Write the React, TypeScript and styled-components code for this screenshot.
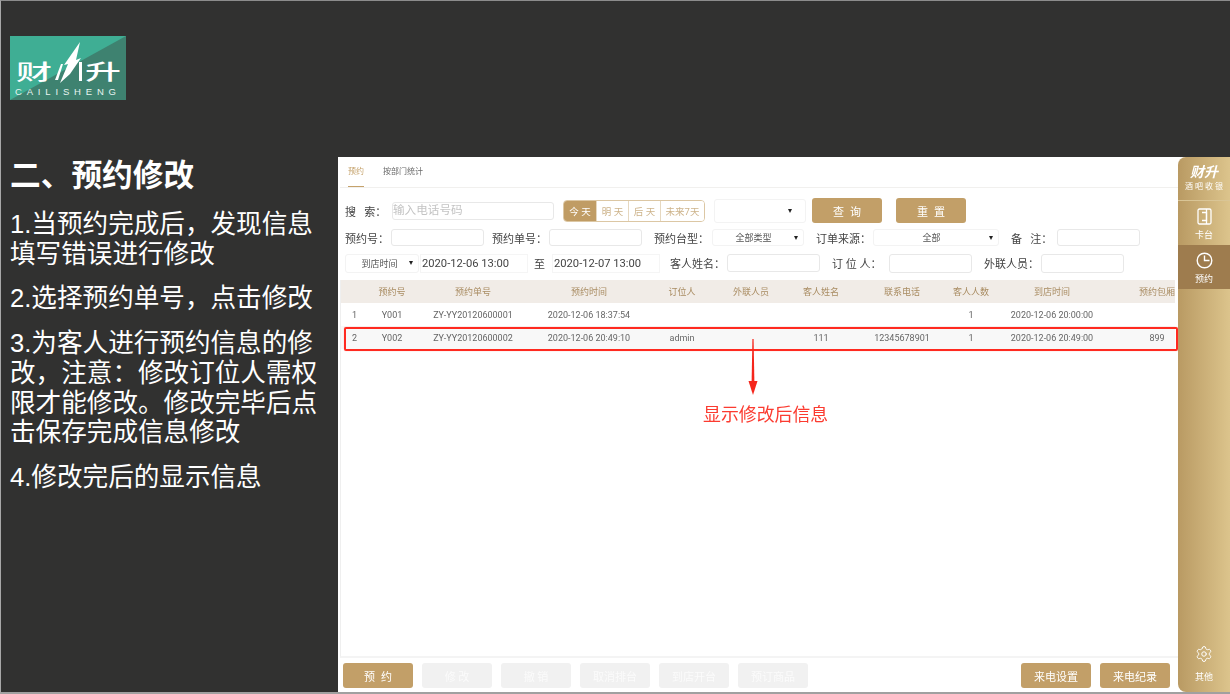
import React from 'react'
import styled, { createGlobalStyle } from 'styled-components'
import { Settings } from 'lucide-react'

const cjk = `Roboto, "Noto Sans CJK SC", sans-serif`

const GlobalStyle = createGlobalStyle`
    html, body { margin: 0; padding: 0; background: #313130; }
    * { box-sizing: border-box; }
`

const Slide = styled.div`
    width: 1230px;
    height: 694px;
    overflow: hidden;
    display: flex;
    background: #313130;
    border-left: 1px solid #a8a8a8;
    border-top: 1px solid #8c8c8c;
    border-bottom: 2px solid #a0a0a0;
    font-family: ${cjk};
`

/* left text column */
const Intro = styled.div`
    width: 337px;
    flex: none;
    padding: 35px 0 0 9px;
    color: #fff;
`
const Logo = styled.svg`
    display: block;
    width: 116px;
    height: 64px;
`
const Title = styled.h1`
    margin: 56px 0 0 0;
    font-size: 30.7px;
    line-height: 40px;
    font-weight: 700;
`
const Para = styled.p`
    margin: 15px 0 0 0;
    width: 320px;
    font-size: 25.6px;
    line-height: 29.7px;
    font-family: "Liberation Sans", "Noto Sans CJK SC", sans-serif;
    &:first-of-type { margin-top: 14px; }
`

/* right side: screenshot of the cashier app */
const AppWrap = styled.div`
    flex: 1;
    padding-top: 156px;
    display: flex;
    min-width: 0;
`
const AppPanel = styled.div`
    flex: 1;
    display: flex;
    background: #fff;
    filter: blur(0.35px);
    min-width: 0;
`
const Main = styled.div`
    width: 840px;
    flex: none;
    display: flex;
    flex-direction: column;
    padding-left: 2px;
`
const Tabs = styled.div`
    height: 31px;
    flex: none;
    display: flex;
    align-items: flex-start;
    gap: 19px;
    padding-left: 8px;
    border-bottom: 1px solid #f1f0ee;
`
const Tab = styled.div<{ $on?: boolean }>`
    height: 30px;
    padding-top: 9px;
    font-size: 8px;
    line-height: 11px;
    color: ${p => (p.$on ? '#c5a26b' : '#6a6a6a')};
    border-bottom: 1px solid ${p => (p.$on ? '#c5a26b' : 'transparent')};
`
const Filters = styled.div`
    flex: none;
    height: 92px;
    padding: 10px 0 0 5px;
    display: flex;
    flex-direction: column;
`
const Row = styled.div<{ $h: number }>`
    display: flex;
    align-items: center;
    height: ${p => p.$h}px;
    flex: none;
`
const Label = styled.span<{ $w: number; $gap?: number }>`
    width: ${p => p.$w}px;
    flex: none;
    margin-left: ${p => p.$gap ?? 0}px;
    font-size: 11px;
    color: #444;
    white-space: nowrap;
`
const Field = styled.div<{ $w: number; $h?: number; $gap?: number }>`
    width: ${p => p.$w}px;
    height: ${p => p.$h ?? 17}px;
    flex: none;
    margin-left: ${p => p.$gap ?? 0}px;
    border: 1px solid #e8e8e8;
    border-radius: 3px;
    background: #fff;
    font-size: 11.6px;
    line-height: 15px;
    color: #c4c4c4;
    white-space: nowrap;
`
const Select = styled.div<{ $w: number; $h?: number; $gap?: number; $pad?: number; $left?: number }>`
    width: ${p => p.$w}px;
    height: ${p => p.$h ?? 17}px;
    flex: none;
    margin-left: ${p => p.$gap ?? 0}px;
    border: 1px solid #f3f3f3;
    border-radius: 3px;
    display: flex;
    align-items: center;
    justify-content: space-between;
    padding: 0 ${p => p.$pad ?? 5}px 0 ${p => p.$left ?? 0}px;
    font-size: 9px;
    color: #555;
    & > span:first-child { flex: 1; text-align: center; }
`
const Caret = styled.span`
    width: 0;
    height: 0;
    flex: none;
    border-left: 2.5px solid transparent;
    border-right: 2.5px solid transparent;
    border-top: 4px solid #222;
`
const DateBox = styled.div<{ $gap?: number }>`
    width: 108px;
    height: 19px;
    flex: none;
    margin-left: ${p => p.$gap ?? 0}px;
    border: 1px solid #f5f5f5;
    font-size: 11.2px;
    line-height: 17px;
    color: #444;
    padding-left: 1px;
`
const Seg = styled.div`
    display: flex;
    width: 142px;
    height: 22px;
    flex: none;
    margin-left: 9px;
    border: 1px solid #dcc7a4;
    border-radius: 4px;
    overflow: hidden;
`
const SegItem = styled.div<{ $on?: boolean; $w: number }>`
    width: ${p => p.$w}px;
    flex: none;
    display: flex;
    align-items: center;
    justify-content: center;
    font-size: 9.5px;
    white-space: pre;
    background: ${p => (p.$on ? '#c09c64' : '#fff')};
    color: ${p => (p.$on ? '#fff' : '#cdb38a')};
    border-right: 1px solid #e6d8c0;
    &:last-child { border-right: none; }
`
const GoldBtn = styled.div<{ $gap?: number; $disabled?: boolean; $spaced?: boolean }>`
    width: 70px;
    height: 25px;
    flex: none;
    margin-left: ${p => p.$gap ?? 0}px;
    border-radius: 3px;
    display: flex;
    align-items: center;
    justify-content: center;
    font-size: 11px;
    white-space: nowrap;
    letter-spacing: ${p => (p.$spaced ? '6px' : '0')};
    padding-left: ${p => (p.$spaced ? '6px' : '0')};
    background: ${p => (p.$disabled ? '#f1f1f1' : '#c29f68')};
    color: ${p => (p.$disabled ? '#fbfbfb' : '#fff')};
`

/* table */
const Table = styled.div`
    flex: 1;
    position: relative;
    border-bottom: 2px solid #f4f4f4;
    border-left: 1px solid #efefef;
`
const columns = '31px 40px 122px 110px 76px 62px 78px 84px 54px 108px 102px'
const HeadRow = styled.div`
    display: grid;
    grid-template-columns: ${columns};
    width: 834px;
    height: 23px;
    overflow: hidden;
    align-items: center;
    background: #f1ece7;
    font-size: 9px;
    color: #a98c62;
    text-align: center;
    white-space: nowrap;
`
const BodyRow = styled.div<{ $marked?: boolean }>`
    display: grid;
    grid-template-columns: ${columns};
    width: 834px;
    height: 23px;
    align-items: center;
    font-size: 9px;
    color: #666;
    text-align: center;
    white-space: nowrap;
    position: relative;
    background: ${p => (p.$marked ? '#f8f8f8' : '#fff')};
    &::after {
        content: '';
        display: ${p => (p.$marked ? 'block' : 'none')};
        position: absolute;
        left: 3px;
        width: 830px;
        top: 1px;
        bottom: -2px;
        border: 2px solid #ff2a20;
        border-radius: 2px;
        box-shadow: 0 0 1px #ff8a80;
    }
`
const Cell = styled.span<{ $left?: boolean }>`
    text-align: ${p => (p.$left ? 'left' : 'center')};
    padding-left: ${p => (p.$left ? '11px' : '0')};
`
const Arrow = styled.svg`
    position: absolute;
    left: 406px;
    top: 59px;
    width: 12px;
    height: 58px;
`
const Note = styled.div`
    position: absolute;
    left: 362px;
    top: 122px;
    font-size: 17.9px;
    line-height: 26px;
    color: #fb3b30;
    white-space: nowrap;
`
const BottomBar = styled.div`
    height: 34px;
    flex: none;
    display: flex;
    align-items: flex-start;
    padding: 5px 8px 0 3px;
`
const Spacer = styled.div`
    flex: 1;
`

/* gold sidebar */
const Side = styled.div`
    flex: 1;
    display: flex;
    flex-direction: column;
    align-items: stretch;
    background: linear-gradient(90deg, #b99a63 0%, #dcc48c 100%);
    border-radius: 8px 0 0 8px;
    color: #fff;
    overflow: hidden;
`
const Brand = styled.div`
    height: 44px;
    flex: none;
    text-align: center;
    padding-top: 7px;
    border-bottom: 1px solid #d9c596;
`
const BrandName = styled.div`
    font-size: 14px;
    line-height: 16px;
    font-weight: 700;
    font-style: italic;
`
const BrandSub = styled.div`
    font-size: 8px;
    line-height: 14px;
    letter-spacing: 2px;
    padding-left: 2px;
    white-space: nowrap;
`
const SideItem = styled.div<{ $on?: boolean; $gap?: number; $bottom?: number; $top?: number }>`
    height: 44px;
    flex: none;
    display: flex;
    flex-direction: column;
    align-items: center;
    justify-content: center;
    gap: ${p => p.$gap ?? 5}px;
    margin-bottom: ${p => p.$bottom ?? 0}px;
    padding-top: ${p => p.$top ?? 0}px;
    font-size: 9px;
    line-height: 11px;
    background: ${p => (p.$on ? '#9e7c4e' : 'transparent')};
`

const heads = ['', '预约号', '预约单号', '预约时间', '订位人', '外联人员', '客人姓名', '联系电话', '客人人数', '到店时间', '预约包厢']
const rows = [
    ['1', 'Y001', 'ZY-YY20120600001', '2020-12-06 18:37:54', '', '', '', '', '1', '2020-12-06 20:00:00', ''],
    ['2', 'Y002', 'ZY-YY20120600002', '2020-12-06 20:49:10', 'admin', '', '111', '12345678901', '1', '2020-12-06 20:49:00', '899'],
]
const actions = ['修 改', '撤 销', '取消排台', '到店开台', '预订商品']

export default function App() {
    return (
        <Slide>
            <GlobalStyle />
            <Intro>
                <Logo viewBox="0 0 116 64">
                    <rect width="116" height="64" fill="#3fae94" />
                    <polygon points="116,0 116,64 0,64" fill="#3e8270" />
                    <text x="6" y="43" fontSize="21" fontWeight="500" fill="#fff" fontFamily='"Noto Sans CJK SC", sans-serif' textLength="36" lengthAdjust="spacingAndGlyphs">财</text>
                    <polygon points="51,28 53,28 48,44 45,44" fill="#fff" />
                    <polygon points="70,6 66,24 71,22 60,38 50,47 58,28 54,29" fill="#fff" />
                    <rect x="69" y="26" width="3" height="19" fill="#fff" />
                    <text x="75" y="43" fontSize="21" fontWeight="500" fill="#fff" fontFamily='"Noto Sans CJK SC", sans-serif' textLength="36" lengthAdjust="spacingAndGlyphs">升</text>
                    <text x="5" y="59" fontSize="9.5" fill="#e8f4f0" textLength="101" fontFamily='"Liberation Sans", sans-serif'>CAILISHENG</text>
                </Logo>
                <Title>二、预约修改</Title>
                <Para>1.当预约完成后，发现信息填写错误进行修改</Para>
                <Para>2.选择预约单号，点击修改</Para>
                <Para>3.为客人进行预约信息的修改，注意：修改订位人需权限才能修改。修改完毕后点击保存完成信息修改</Para>
                <Para>4.修改完后的显示信息</Para>
            </Intro>
            <AppWrap>
                <AppPanel>
                    <Main>
                        <Tabs>
                            <Tab $on>预约</Tab>
                            <Tab>按部门统计</Tab>
                        </Tabs>
                        <Filters>
                            <Row $h={25}>
                                <Label $w={47}>搜&nbsp;&nbsp;&nbsp;索：</Label>
                                <Field $w={162} $h={18}>输入电话号码</Field>
                                <Seg>
                                    <SegItem $on $w={33}>今 天</SegItem>
                                    <SegItem $w={32}>明 天</SegItem>
                                    <SegItem $w={32}>后 天</SegItem>
                                    <SegItem $w={43}>未来7天</SegItem>
                                </Seg>
                                <Select $w={92} $h={24} $gap={9} $pad={13}>
                                    <span />
                                    <Caret />
                                </Select>
                                <GoldBtn $gap={6} $spaced>查询</GoldBtn>
                                <GoldBtn $gap={14} $spaced>重置</GoldBtn>
                            </Row>
                            <Row $h={29}>
                                <Label $w={46}>预约号：</Label>
                                <Field $w={93} />
                                <Label $w={57} $gap={8}>预约单号：</Label>
                                <Field $w={93} />
                                <Label $w={58} $gap={12}>预约台型：</Label>
                                <Select $w={92}>
                                    <span>全部类型</span>
                                    <Caret />
                                </Select>
                                <Label $w={57} $gap={12}>订单来源：</Label>
                                <Select $w={126}>
                                    <span>全部</span>
                                    <Caret />
                                </Select>
                                <Label $w={46} $gap={12}>备&nbsp;&nbsp;&nbsp;注：</Label>
                                <Field $w={83} />
                            </Row>
                            <Row $h={22}>
                                <Select $w={74} $h={19} $pad={5} $left={4}>
                                    <span>到店时间</span>
                                    <Caret />
                                </Select>
                                <DateBox $gap={1}>2020-12-06 13:00</DateBox>
                                <Label $w={18} $gap={6}>至</Label>
                                <DateBox>2020-12-07 13:00</DateBox>
                                <Label $w={57} $gap={10}>客人姓名：</Label>
                                <Field $w={93} $h={18} />
                                <Label $w={57} $gap={12}>订&nbsp;位&nbsp;人：</Label>
                                <Field $w={83} $h={19} />
                                <Label $w={57} $gap={12}>外联人员：</Label>
                                <Field $w={83} $h={19} />
                            </Row>
                        </Filters>
                        <Table>
                            <HeadRow>
                                {heads.map((h, i) => <Cell key={i}>{h}</Cell>)}
                            </HeadRow>
                            {rows.map((r, i) => (
                                <BodyRow key={i} $marked={i === 1}>
                                    {r.map((c, j) => <Cell key={j} $left={j === 0}>{c}</Cell>)}
                                </BodyRow>
                            ))}
                            <Arrow viewBox="0 0 12 58">
                                <polygon points="5.4,0 6.6,0 7.4,44 4.6,44" fill="#f5261c" />
                                <polygon points="1.5,42 10.5,42 6,56" fill="#f5261c" />
                            </Arrow>
                            <Note>显示修改后信息</Note>
                        </Table>
                        <BottomBar>
                            <GoldBtn $spaced>预约</GoldBtn>
                            {actions.map(a => <GoldBtn key={a} $gap={9} $disabled>{a}</GoldBtn>)}
                            <Spacer />
                            <GoldBtn>来电设置</GoldBtn>
                            <GoldBtn $gap={9}>来电纪录</GoldBtn>
                        </BottomBar>
                    </Main>
                    <Side>
                        <Brand>
                            <BrandName>财升</BrandName>
                            <BrandSub>酒吧收银</BrandSub>
                        </Brand>
                        <SideItem $top={2}>
                            <svg width="15" height="17" viewBox="0 0 15 17" fill="none" stroke="#fff" strokeWidth="1.3">
                                <rect x="1" y="1" width="13" height="15" rx="1.5" />
                                <path d="M5 4.5h4.5v8H5" />
                                <path d="M9.5 1v15" />
                            </svg>
                            卡台
                        </SideItem>
                        <SideItem $on $top={2}>
                            <svg width="17" height="17" viewBox="0 0 17 17" fill="none" stroke="#fff" strokeWidth="1.4">
                                <circle cx="8.5" cy="8.5" r="7.3" />
                                <path d="M8.5 3.5v5h5" />
                            </svg>
                            预约
                        </SideItem>
                        <Spacer />
                        <SideItem $gap={9} $bottom={6}>
                            <Settings size={18} strokeWidth={1.3} />
                            其他
                        </SideItem>
                    </Side>
                </AppPanel>
            </AppWrap>
        </Slide>
    )
}
